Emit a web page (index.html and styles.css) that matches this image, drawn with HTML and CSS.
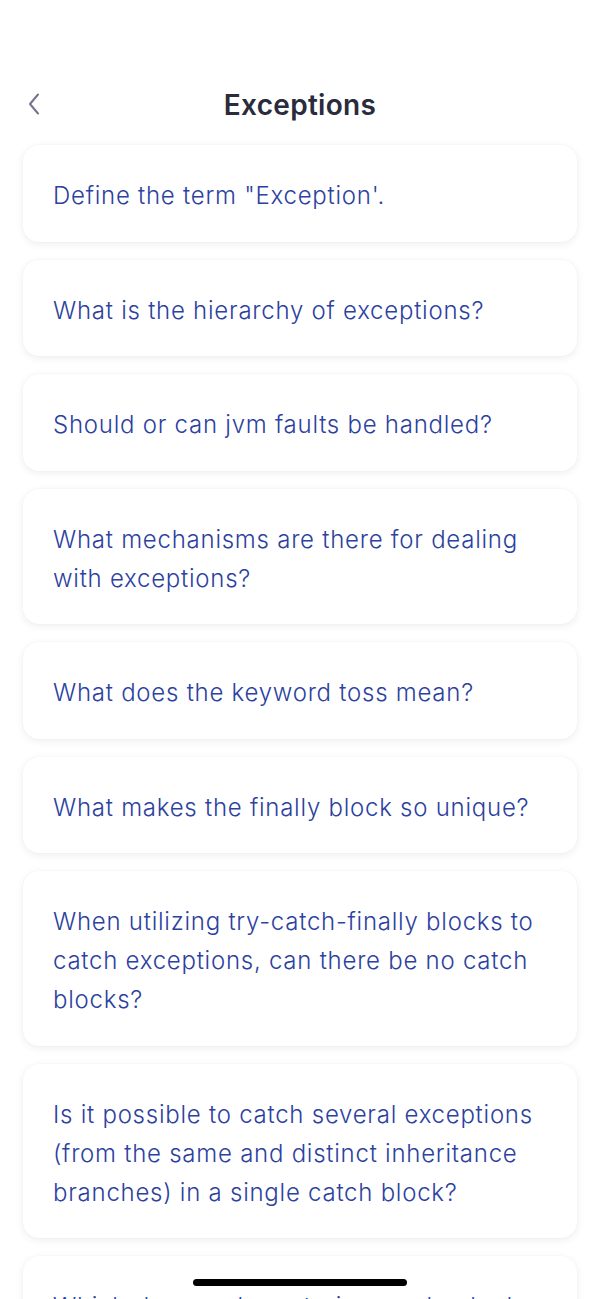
FILE: index.html
```html
<!DOCTYPE html>
<html>
<head>
<meta charset="utf-8">
<link rel="stylesheet" href="styles.css">
</head>
<body>
<div class="screen">
  <header class="nav">
    <svg class="back" width="14" height="24" viewBox="0 0 14 24"><path d="M11 2.5 L3 12 L11 21.5" fill="none" stroke="#74748a" stroke-width="2" stroke-linecap="round" stroke-linejoin="round"/></svg>
    <h1 class="title">Exceptions</h1>
  </header>
  <main class="list">
    <div class="card">Define the term "Exception'.</div>
    <div class="card">What is the hierarchy of exceptions?</div>
    <div class="card">Should or can jvm faults be handled?</div>
    <div class="card">What mechanisms are there for dealing with exceptions?</div>
    <div class="card">What does the keyword toss mean?</div>
    <div class="card">What makes the finally block so unique?</div>
    <div class="card">When utilizing try-catch-finally blocks to catch exceptions, can there be no catch blocks?</div>
    <div class="card">Is it possible to catch several exceptions (from the same and distinct inheritance branches) in a single catch block?</div>
    <div class="card">Which do you characterize as checked exceptions?</div>
  </main>
  <div class="home"></div>
</div>
</body>
</html>
```
FILE: styles.css
```css
html, body {
  margin: 0;
  padding: 0;
  background: #ffffff;
}
.screen {
  width: 600px;
  height: 1299px;
  overflow: hidden;
  position: relative;
  font-family: Inter, "Open Sans", sans-serif;
}
.nav {
  position: relative;
  height: 145px;
  display: flex;
  align-items: flex-start;
  justify-content: center;
}
.back {
  position: absolute;
  left: 27px;
  top: 92px;
}
.title {
  margin: 87px 0 0 0;
  font-family: Inter, sans-serif;
  font-weight: 600;
  font-size: 28px;
  line-height: 36px;
  letter-spacing: 0.3px;
  color: #2a2b3d;
}
.list {
  display: flex;
  flex-direction: column;
  gap: 18px;
  padding: 0 23px;
}
.card {
  background: #fff;
  border-radius: 16px;
  box-shadow: 0 2px 8px rgba(0,0,0,0.07), 0 0 2px rgba(0,0,0,0.04);
  padding: 31px 30px 26.5px 30px;
  font-family: Inter, sans-serif;
  font-weight: 300;
  font-size: 24px;
  line-height: 39px;
  color: #2c41a0;
  letter-spacing: 0.75px;
}
.home {
  position: absolute;
  left: 193px;
  top: 1279px;
  width: 214px;
  height: 7px;
  border-radius: 4px;
  background: #000;
}
```
